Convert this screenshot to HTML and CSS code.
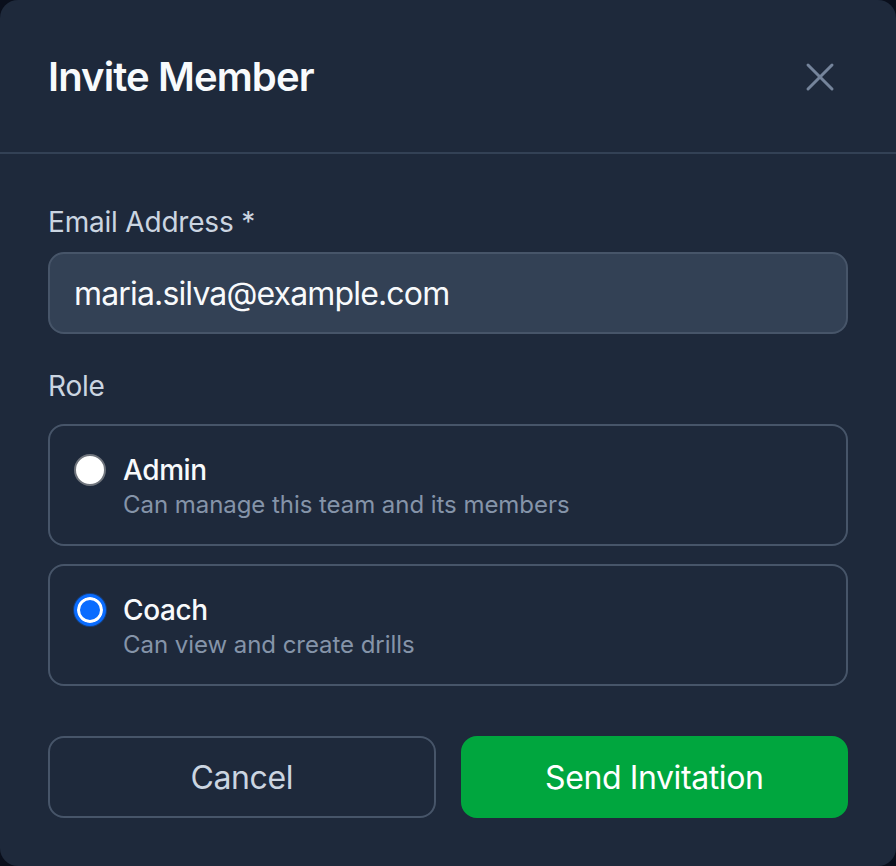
FILE: index.html
```html
<!DOCTYPE html>
<html lang="en">
<head>
<meta charset="utf-8">
<title>Invite Member</title>
<link rel="stylesheet" href="styles.css">
</head>
<body>
<div class="modal">
  <header class="modal-header">
    <h2 class="modal-title">Invite Member</h2>
    <button class="close-btn" aria-label="Close">
      <svg width="48" height="48" viewBox="0 0 24 24" fill="none" stroke="currentColor" stroke-width="1.5" stroke-linecap="round" stroke-linejoin="round"><path d="M18 6 6 18"/><path d="m6 6 12 12"/></svg>
    </button>
  </header>
  <div class="modal-body">
    <label class="field-label" for="email">Email Address *</label>
    <input class="text-input" id="email" type="email" value="maria.silva@example.com">
    <div class="field-label role-label">Role</div>
    <div class="options">
      <div class="option">
        <span class="radio"></span>
        <span class="option-text">
          <span class="option-title">Admin</span>
          <span class="option-desc">Can manage this team and its members</span>
        </span>
      </div>
      <div class="option">
        <span class="radio checked"></span>
        <span class="option-text">
          <span class="option-title">Coach</span>
          <span class="option-desc">Can view and create drills</span>
        </span>
      </div>
    </div>
    <div class="modal-footer">
      <button class="btn btn-cancel">Cancel</button>
      <button class="btn btn-primary">Send Invitation</button>
    </div>
  </div>
</div>
</body>
</html>
```

FILE: styles.css
```css
* { box-sizing: border-box; }

html, body {
  margin: 0;
  padding: 0;
  height: 100%;
}

body {
  background: #0a0f1c;
  font-family: Inter, "Noto Sans", "Liberation Sans", sans-serif;
  color: #f1f5f9;
}

.modal {
  height: 100vh;
  width: 100%;
  background: #1e293b;
  border-radius: 18px;
  display: flex;
  flex-direction: column;
  overflow: hidden;
}

.modal-header {
  display: flex;
  align-items: center;
  justify-content: space-between;
  padding: 49px 52px 47px 48px;
  border-bottom: 2px solid #334155;
}

.modal-title {
  margin: 0;
  font-size: 40px;
  line-height: 56px;
  font-weight: 600;
  color: #f8fafc;
  letter-spacing: -0.9px;
}

.close-btn {
  border: 0;
  background: transparent;
  padding: 0;
  width: 48px;
  height: 48px;
  color: #75849b;
  display: flex;
  align-items: center;
  justify-content: center;
  cursor: pointer;
}

.modal-body {
  padding: 48px 48px 48px;
  display: flex;
  flex-direction: column;
  flex: 1;
}

.field-label {
  display: block;
  font-size: 28px;
  line-height: 40px;
  font-weight: 400;
  color: #cbd5e1;
  margin-bottom: 10px;
  letter-spacing: -0.2px;
}

.role-label {
  margin-top: 32px;
  margin-bottom: 18px;
}

.text-input {
  display: block;
  width: 100%;
  height: 82px;
  margin: 0;
  padding: 0 24px;
  background: #334155;
  border: 2px solid #475569;
  border-radius: 16px;
  font-family: inherit;
  font-size: 32px;
  color: #f8fafc;
  outline: none;
  letter-spacing: -0.85px;
}

.options {
  display: flex;
  flex-direction: column;
  gap: 18px;
}

.option {
  display: flex;
  align-items: flex-start;
  gap: 17px;
  padding: 24px;
  border: 2px solid #475569;
  border-radius: 16px;
  height: 122px;
}

.radio {
  flex: none;
  width: 32px;
  height: 32px;
  margin-top: 4px;
  border-radius: 50%;
  background: #ffffff;
  border: 2px solid #70757d;
}

.radio.checked {
  background: #0a6cff;
  border: 3px solid #0a6cff;
  box-shadow: inset 0 0 0 3px #ffffff, 0 0 0 1px rgba(10, 108, 255, 0.35);
}

.option-text {
  display: flex;
  flex-direction: column;
}

.option-title {
  font-size: 28px;
  line-height: 40px;
  font-weight: 500;
  color: #f8fafc;
  letter-spacing: -0.4px;
}

.option-desc {
  font-size: 24px;
  line-height: 30px;
  color: #8594a9;
  letter-spacing: -0.05px;
}

.modal-footer {
  display: flex;
  gap: 25px;
  margin-top: 50px;
}

.btn {
  flex: 1;
  height: 82px;
  border-radius: 16px;
  font-family: inherit;
  font-size: 32px;
  font-weight: 400;
  cursor: pointer;
  letter-spacing: -0.4px;
}

.btn-cancel {
  background: transparent;
  border: 2px solid #475569;
  color: #cbd5e1;
}

.btn-primary {
  background: #00a63e;
  border: 2px solid #00a63e;
  color: #ffffff;
}
```
